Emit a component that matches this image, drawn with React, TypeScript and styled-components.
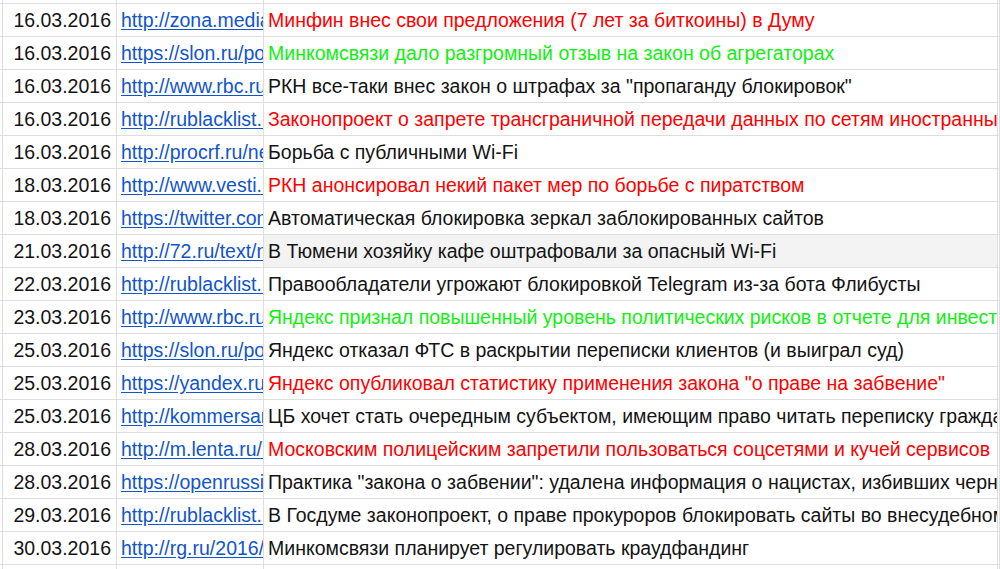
import React from 'react'
import styled, { createGlobalStyle } from 'styled-components'

const GlobalStyle = createGlobalStyle`
  html, body {
    margin: 0;
    padding: 0;
    background: #fff;
    overflow: hidden;
  }
`

type Tone = 'red' | 'green' | 'plain'

const toneColor: Record<Tone, string> = {
  red: '#ff0000',
  green: '#11f011',
  plain: '#141414',
}

const Sheet = styled.div`
  width: 1000px;
  height: 569px;
  overflow: hidden;
  font-family: 'Liberation Sans', Arial, sans-serif;
  font-size: 19.5px;
`

const Grid = styled.div`
  display: grid;
  grid-template-columns: 3px 114px 147px 734px 2px;
  grid-auto-rows: 33px;
  margin-top: -29px;
`

const Cell = styled.div<{ $shade?: boolean }>`
  display: flex;
  align-items: center;
  overflow: hidden;
  white-space: nowrap;
  border-right: 1px solid #dedede;
  border-bottom: 1px solid #dedede;
  background: ${({ $shade }) => ($shade ? '#f3f3f3' : '#fff')};
  box-sizing: border-box;
`

const DateCell = styled(Cell)`
  justify-content: flex-end;
  padding-right: 5px;
  color: #141414;
`

const LinkCell = styled(Cell)`
  padding-left: 4px;
`

const Link = styled.a`
  color: #1155cc;
  text-decoration: underline;
  text-underline-offset: 2px;
`

const TextCell = styled(Cell)<{ $tone: Tone }>`
  padding-left: 4px;
  color: ${({ $tone }) => toneColor[$tone]};
`

const rows: { date: string; url: string; text: string; tone: Tone; shade?: boolean }[] = [
  { date: '15.03.2016', url: 'https://roem.ru/15', text: 'Депутаты предложили (через суд) регулировать рунет группу', tone: 'plain' },
  { date: '16.03.2016', url: 'http://zona.media/news', text: 'Минфин внес свои предложения (7 лет за биткоины) в Думу', tone: 'red' },
  { date: '16.03.2016', url: 'https://slon.ru/posts', text: 'Минкомсвязи дало разгромный отзыв на закон об агрегаторах', tone: 'green' },
  { date: '16.03.2016', url: 'http://www.rbc.ru/politics', text: 'РКН все-таки внес закон о штрафах за "пропаганду блокировок"', tone: 'plain' },
  { date: '16.03.2016', url: 'http://rublacklist.net/', text: 'Законопроект о запрете трансграничной передачи данных по сетям иностранных', tone: 'red' },
  { date: '16.03.2016', url: 'http://procrf.ru/news', text: 'Борьба с публичными Wi-Fi', tone: 'plain' },
  { date: '18.03.2016', url: 'http://www.vesti.ru/doc', text: 'РКН анонсировал некий пакет мер по борьбе с пиратством', tone: 'red' },
  { date: '18.03.2016', url: 'https://twitter.com/rkn', text: 'Автоматическая блокировка зеркал заблокированных сайтов', tone: 'plain' },
  { date: '21.03.2016', url: 'http://72.ru/text/news', text: 'В Тюмени хозяйку кафе оштрафовали за опасный Wi-Fi', tone: 'plain', shade: true },
  { date: '22.03.2016', url: 'http://rublacklist.net/', text: 'Правообладатели угрожают блокировкой Telegram из-за бота Флибусты', tone: 'plain' },
  { date: '23.03.2016', url: 'http://www.rbc.ru/technology', text: 'Яндекс признал повышенный уровень политических рисков в отчете для инвесторов', tone: 'green' },
  { date: '25.03.2016', url: 'https://slon.ru/posts', text: 'Яндекс отказал ФТС в раскрытии переписки клиентов (и выиграл суд)', tone: 'plain' },
  { date: '25.03.2016', url: 'https://yandex.ru/blog', text: 'Яндекс опубликовал статистику применения закона "о праве на забвение"', tone: 'red' },
  { date: '25.03.2016', url: 'http://kommersant.ru/doc', text: 'ЦБ хочет стать очередным субъектом, имеющим право читать переписку граждан', tone: 'plain' },
  { date: '28.03.2016', url: 'http://m.lenta.ru/news', text: 'Московским полицейским запретили пользоваться соцсетями и кучей сервисов', tone: 'red' },
  { date: '28.03.2016', url: 'https://openrussia.org', text: 'Практика "закона о забвении": удалена информация о нацистах, избивших черного', tone: 'plain' },
  { date: '29.03.2016', url: 'http://rublacklist.net/', text: 'В Госдуме законопроект, о праве прокуроров блокировать сайты во внесудебном', tone: 'plain' },
  { date: '30.03.2016', url: 'http://rg.ru/2016/03/30', text: 'Минкомсвязи планирует регулировать краудфандинг', tone: 'plain' },
  { date: '', url: '', text: '', tone: 'plain' },
]

export default function App() {
  return (
    <Sheet>
      <GlobalStyle />
      <Grid>
        {rows.map((r, i) => (
          <React.Fragment key={i}>
            <Cell />
            <DateCell>{r.date}</DateCell>
            <LinkCell>{r.url && <Link href="#">{r.url}</Link>}</LinkCell>
            <TextCell $tone={r.tone} $shade={r.shade}>{r.text}</TextCell>
            <Cell />
          </React.Fragment>
        ))}
      </Grid>
    </Sheet>
  )
}
